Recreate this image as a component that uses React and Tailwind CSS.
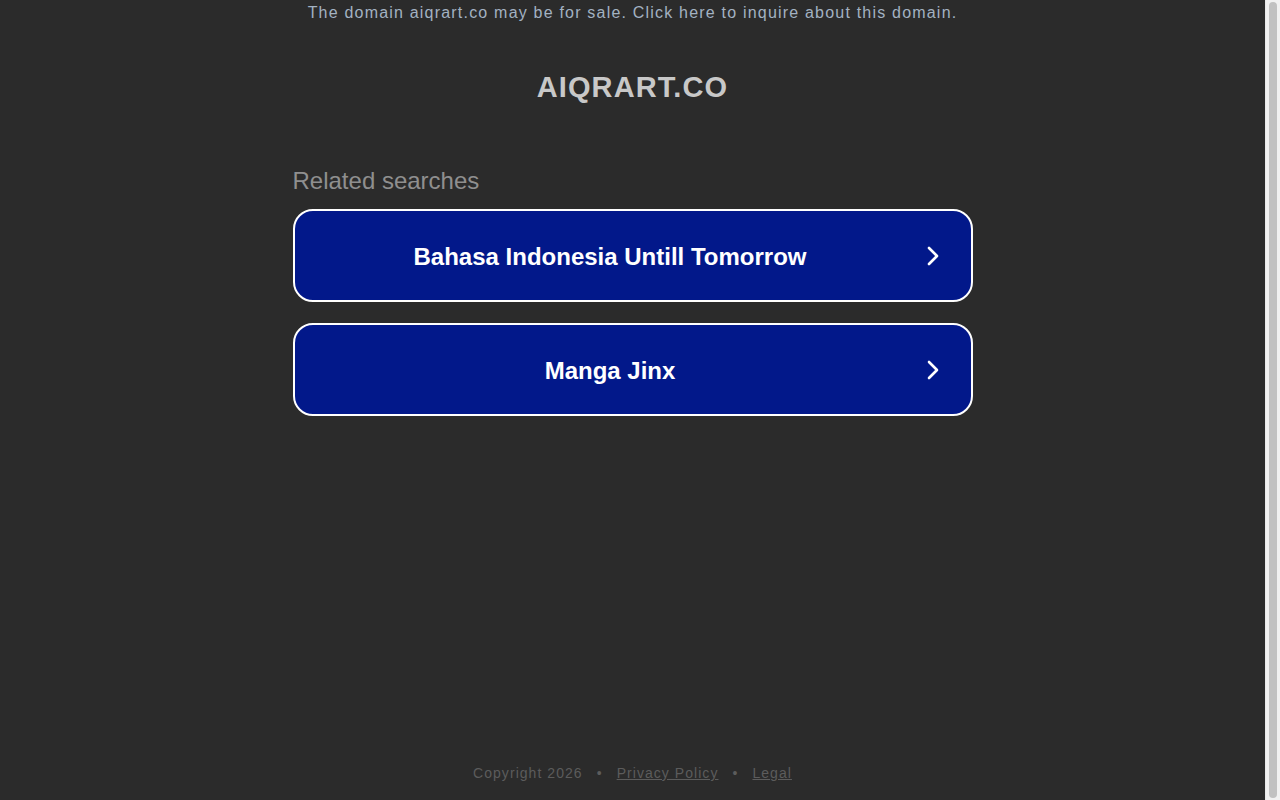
const searches = ['Bahasa Indonesia Untill Tomorrow', 'Manga Jinx'];

const Chevron = () => (
  <svg width="14" height="20" viewBox="0 0 14 20" className="mr-[31px] shrink-0">
    <polyline points="3,2 11,10 3,18" fill="none" stroke="white" strokeWidth="2.6" strokeLinecap="round" strokeLinejoin="round" />
  </svg>
);

const App = () => {
  return (
    <div className="h-[800px] flex bg-[#2b2b2b]" style={{ fontFamily: '"Liberation Sans", Arial, sans-serif' }}>
      <div className="flex-1 flex flex-col items-center">
        {/* Top banner */}
        <div className="pt-[3px] text-[16px] leading-[20px] tracking-[1.2px] text-[#a3b2c2]">
          The domain aiqrart.co may be for sale. Click here to inquire about this domain.
        </div>

        {/* Domain title */}
        <h1 className="mt-[47px] text-[29px] leading-[34px] font-bold tracking-[1.1px] text-[#c8c8c8]">
          AIQRART.CO
        </h1>

        {/* Related searches */}
        <div className="mt-[62px] w-[680px]">
          <h2 className="text-[24px] leading-[30px] text-[#8f8f8f]">Related searches</h2>
          <div className="mt-[13px] flex flex-col gap-[21px]">
            {searches.map((s) => (
              <div
                key={s}
                className="h-[93px] flex items-center rounded-[20px] border-2 border-white bg-[#02188a]"
              >
                <span className="flex-1 text-center text-white font-bold text-[24px] pt-[2px]">{s}</span>
                <Chevron />
              </div>
            ))}
          </div>
        </div>

        {/* Footer */}
        <div className="mt-auto pb-[18px] flex items-center gap-[14px] text-[14px] leading-[17px] tracking-[1.05px] text-[#5c5c5c]">
          <span>Copyright 2026</span>
          <span>•</span>
          <span className="underline">Privacy Policy</span>
          <span>•</span>
          <span className="underline">Legal</span>
        </div>
      </div>

      {/* Scrollbar */}
      <div className="w-[15px] bg-[#f1f1f1] border-l border-[#e8e8e8] py-[2px] flex justify-center">
        <div className="w-[8px] h-full rounded-full bg-[#c1c1c1]" />
      </div>
    </div>
  );
};

export default App;
